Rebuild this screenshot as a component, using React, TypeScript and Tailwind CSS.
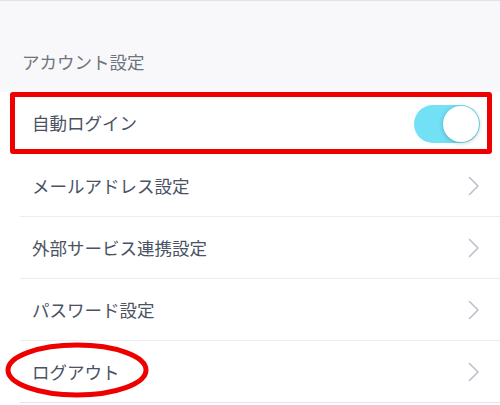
import React from "react";

const Chevron = () => (
  <svg width="12" height="20" viewBox="0 0 12 20" fill="none">
    <path d="M1.5 1.5 L10 10 L1.5 18.5" stroke="#bcc0cb" strokeWidth="1.6" strokeLinecap="round" strokeLinejoin="round" />
  </svg>
);

const Row = ({ label, last }: { label: string; last?: boolean }) => (
  <div className="relative flex h-[62px] items-center justify-between bg-white pl-[32px] pr-[20px]">
    <span className="text-[17.5px] text-[#4a5263]">{label}</span>
    <Chevron />
    <div className={`absolute bottom-0 left-[20px] right-0 h-px ${last ? "bg-[#e4e4e8] left-0" : "bg-[#ededf0]"}`} />
  </div>
);

export default function App() {
  return (
    <div className="h-[405px] w-[500px] overflow-hidden bg-white" style={{ fontFamily: '"Noto Sans CJK JP", "Noto Sans", sans-serif' }}>
      <div className="flex h-[92px] items-end border-t border-[#e2e2e6] bg-[#f8f8fa] pb-[17px] pl-[22px]">
        <span className="text-[17.5px] text-[#6e7380]">アカウント設定</span>
      </div>
      <div className="relative flex h-[63px] items-center justify-between bg-white pl-[32px] pr-[20px]">
        <span className="text-[17.5px] text-[#4a5263]">自動ログイン</span>
        <div className="flex h-[38px] w-[66px] items-center justify-end rounded-full bg-[#72e0f5] pr-[1px]">
          <div className="h-[36px] w-[36px] rounded-full bg-white shadow-[0_1px_4px_rgba(0,0,0,0.25)]" />
        </div>
        <div className="absolute bottom-[1px] left-[10px] right-[8px] top-0 rounded-[3px] border-[5px] border-[#ee0000]" />
      </div>
      <Row label="メールアドレス設定" />
      <Row label="外部サービス連携設定" />
      <Row label="パスワード設定" />
      <div className="relative">
        <Row label="ログアウト" last />
        <svg className="absolute left-0 top-0" width="160" height="62" viewBox="0 0 160 62">
          <ellipse cx="77" cy="29" rx="69" ry="25" fill="none" stroke="#ee0000" strokeWidth="5" />
        </svg>
      </div>
    </div>
  );
}
